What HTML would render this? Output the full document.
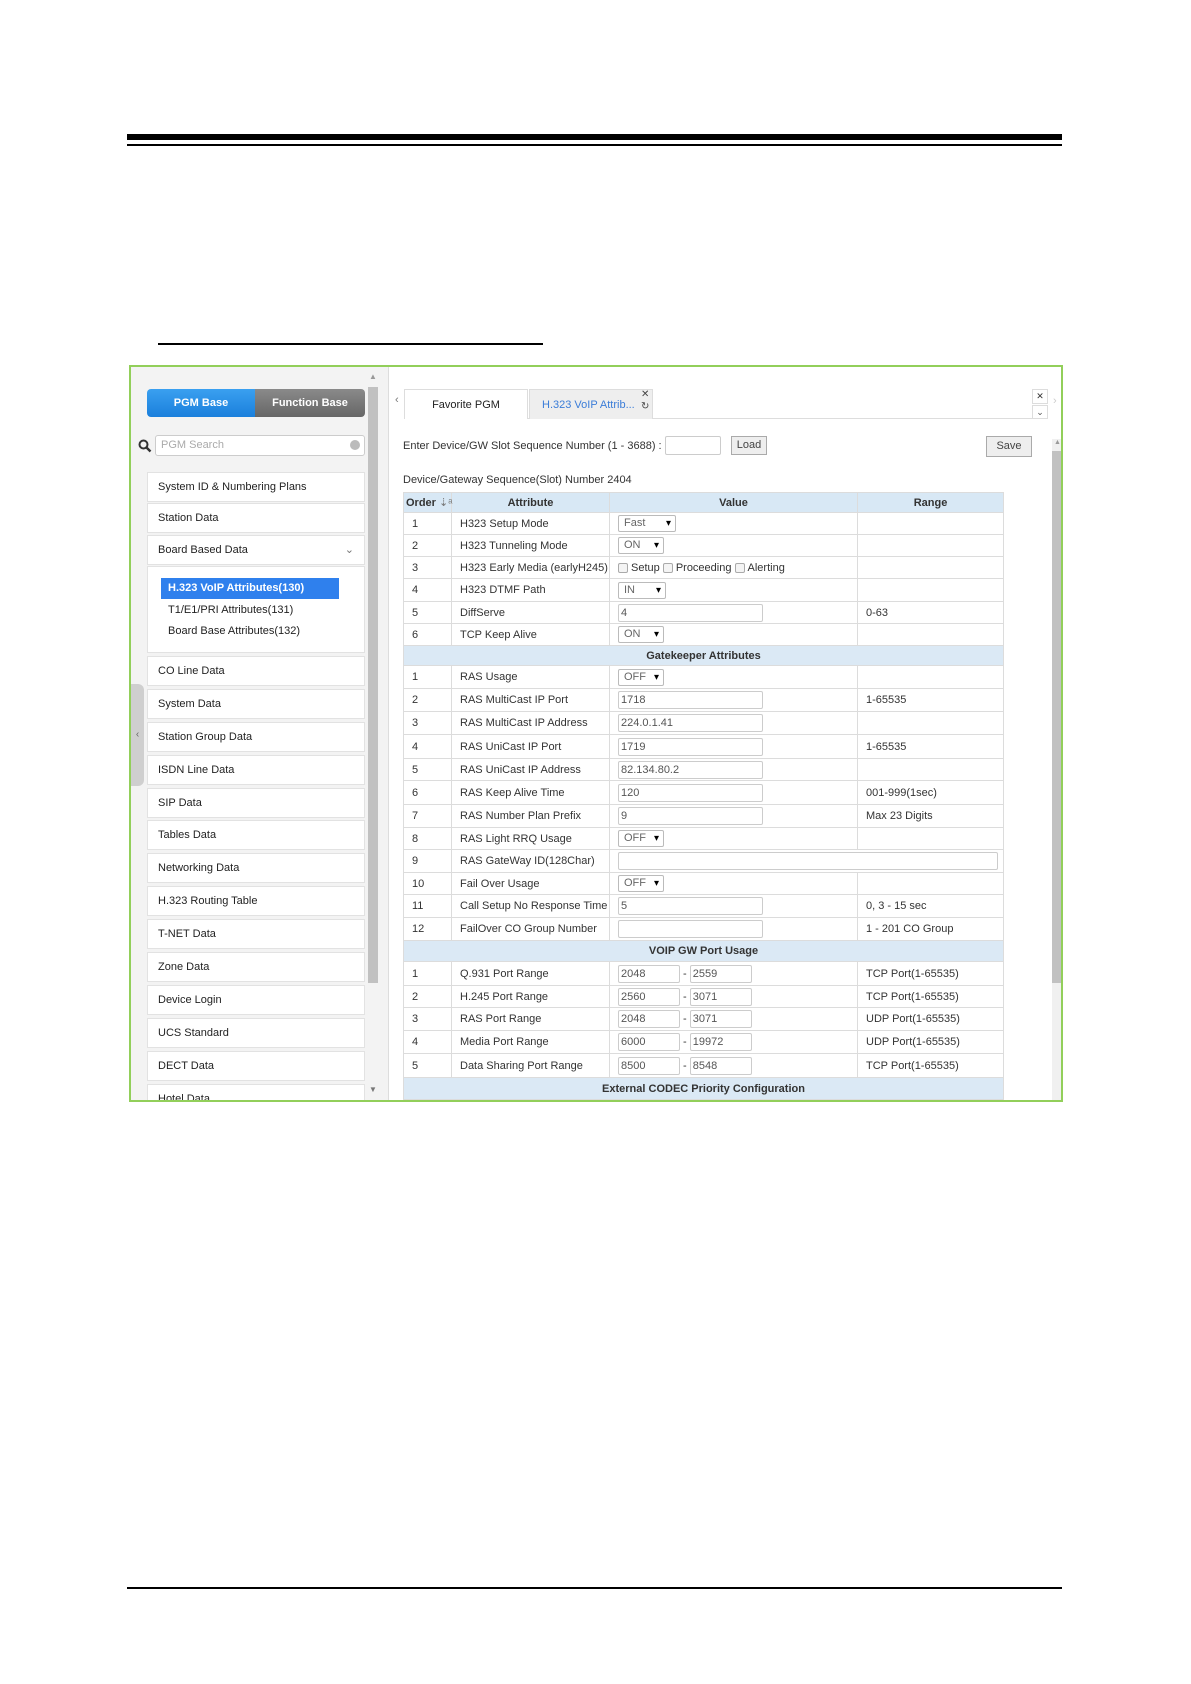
<!DOCTYPE html>
<html><head><meta charset="utf-8">
<style>
*{margin:0;padding:0;box-sizing:border-box}
body{width:1191px;height:1684px;background:#fff;position:relative;font-family:"Liberation Sans",Arial,sans-serif;color:#333;overflow:hidden}
.a{position:absolute}
.box{left:129px;top:365px;width:934px;height:737px;border:2px solid #92cf5a;background:#fff;overflow:hidden}
.lp{left:0;top:0;width:257px;height:735px;background:#f3f3f3}
.mi{position:absolute;left:16px;width:218px;height:30px;background:#fff;border:1px solid #e2e2e2;font-size:11px;line-height:28px;padding-left:10px;color:#222}
table{border-collapse:collapse;font-size:11px;table-layout:fixed}
td{border:1px solid #dcdcdc;padding:0 0 0 8px;white-space:nowrap;vertical-align:middle;overflow:visible}
tr.h td{background:#d8e8f5;font-weight:bold;text-align:center;padding:0;color:#333}
tr.s td{background:#dbe9f5;font-weight:bold;text-align:center;padding:0}
.in{display:inline-block;height:18px;border:1px solid #ccc;border-radius:2px;vertical-align:middle;font-size:11px;line-height:16px;padding-left:2px;color:#555;background:#fff}
.sel{display:inline-block;height:17px;border:1px solid #bbb;border-radius:2px;vertical-align:middle;font-size:11px;line-height:15px;padding-left:5px;color:#666;position:relative;background:#fff}
.sel:after{content:"▾";position:absolute;right:4px;top:0;font-size:10px;color:#000}
.cb{display:inline-block;width:10px;height:10px;border:1px solid #aaa;border-radius:2px;vertical-align:middle;margin-right:3px;background:#f4f4f4}
</style></head><body>
<div class="a" style="left:127px;top:134px;width:935px;height:6px;background:#000"></div>
<div class="a" style="left:127px;top:144px;width:935px;height:2px;background:#000"></div>
<div class="a" style="left:158px;top:343px;width:385px;height:2px;background:#000"></div>
<div class="a" style="left:127px;top:1587px;width:935px;height:2px;background:#000"></div>

<div class="a box">
 <div class="a lp">
  <div class="a" style="left:0;top:317px;width:13px;height:102px;background:#cfcfcf;border-radius:0 6px 6px 0;font-size:10px;color:#666;line-height:102px;text-align:center">‹</div>
  <div class="a" style="left:16px;top:22px;width:218px;height:28px;border-radius:4px;overflow:hidden;font-size:11px;font-weight:bold;color:#fff;line-height:28px;text-align:center">
   <div class="a" style="left:0;top:0;width:108px;height:28px;background:linear-gradient(#3aa0f0,#1a7fdc)">PGM Base</div>
   <div class="a" style="left:108px;top:0;width:110px;height:28px;background:linear-gradient(#8a8a8a,#666)">Function Base</div>
  </div>
  <svg class="a" style="left:7px;top:72px" width="14" height="14" viewBox="0 0 14 14"><circle cx="5.5" cy="5.5" r="4" fill="none" stroke="#333" stroke-width="2"/><path d="M8.5 8.5L12.5 12.5" stroke="#333" stroke-width="2.4"/></svg>
  <div class="a" style="left:24px;top:68px;width:210px;height:21px;background:#fff;border:1px solid #ccc;border-radius:3px;font-size:11px;color:#aaa;line-height:19px;padding-left:5px">PGM Search<span style="position:absolute;right:4px;top:4px;width:10px;height:10px;border-radius:50%;background:#bbb"></span></div>
  <div class="mi" style="top:105px">System ID &amp; Numbering Plans</div>
  <div class="mi" style="top:136px">Station Data</div>
  <div class="mi" style="top:168px">Board Based Data<span style="position:absolute;right:10px;color:#777">⌄</span></div>
  <div class="a" style="left:16px;top:199px;width:218px;height:87px;background:#fff;border:1px solid #e2e2e2">
   <div class="a" style="left:13px;top:11px;width:178px;height:21px;background:#2f80ed;color:#fff;font-weight:bold;font-size:11px;line-height:21px;padding-left:7px">H.323 VoIP Attributes(130)</div>
   <div class="a" style="left:20px;top:33px;font-size:11px;line-height:21px;color:#222">T1/E1/PRI Attributes(131)</div>
   <div class="a" style="left:20px;top:54px;font-size:11px;line-height:21px;color:#222">Board Base Attributes(132)</div>
  </div>
  <div class="mi" style="top:289px">CO Line Data</div>
  <div class="mi" style="top:322px">System Data</div>
  <div class="mi" style="top:355px">Station Group Data</div>
  <div class="mi" style="top:388px">ISDN Line Data</div>
  <div class="mi" style="top:421px">SIP Data</div>
  <div class="mi" style="top:453px">Tables Data</div>
  <div class="mi" style="top:486px">Networking Data</div>
  <div class="mi" style="top:519px">H.323 Routing Table</div>
  <div class="mi" style="top:552px">T-NET Data</div>
  <div class="mi" style="top:585px">Zone Data</div>
  <div class="mi" style="top:618px">Device Login</div>
  <div class="mi" style="top:651px">UCS Standard</div>
  <div class="mi" style="top:684px">DECT Data</div>
  <div class="mi" style="top:717px">Hotel Data</div>
  <div class="a" style="left:237px;top:20px;width:10px;height:596px;background:#c1c1c1"></div>
  <div class="a" style="left:237px;top:0;width:10px;height:20px;font-size:8px;color:#999;text-align:center;line-height:20px">▲</div>
  <div class="a" style="left:237px;top:718px;width:10px;height:16px;font-size:8px;color:#777;text-align:center">▼</div>
 </div>
 <div class="a" style="left:257px;top:0;width:1px;height:735px;background:#ddd"></div>

 <div class="a" style="left:264px;top:27px;font-size:11px;color:#777">‹</div>
 <div class="a" style="left:273px;top:51px;width:644px;height:1px;background:#ddd"></div>
 <div class="a" style="left:273px;top:22px;width:124px;height:30px;background:#fff;border:1px solid #ddd;border-bottom:none;font-size:11px;line-height:30px;text-align:center;color:#222">Favorite PGM</div>
 <div class="a" style="left:398px;top:22px;width:124px;height:30px;background:#eee;border:1px solid #ddd;border-bottom:none;font-size:11px;line-height:30px;padding-left:12px;color:#3b7dd8">H.323 VoIP Attrib...</div>
 <div class="a" style="left:510px;top:22px;font-size:10px;color:#444;line-height:12px">✕<br>↻</div>
 <div class="a" style="left:901px;top:22px;width:16px;height:15px;border:1px solid #ddd;font-size:9px;text-align:center;line-height:13px;color:#333">✕</div>
 <div class="a" style="left:901px;top:38px;width:16px;height:14px;border:1px solid #ddd;font-size:9px;text-align:center;line-height:12px;color:#555">⌄</div>
 <div class="a" style="left:922px;top:28px;font-size:11px;color:#ccc">›</div>

 <div class="a" style="left:272px;top:73px;font-size:11px;color:#333">Enter Device/GW Slot Sequence Number (1 - 3688) :</div>
 <div class="a" style="left:534px;top:69px;width:56px;height:19px;border:1px solid #ccc;border-radius:2px"></div>
 <div class="a" style="left:600px;top:69px;width:36px;height:19px;border:1px solid #aaa;background:#eee;font-size:11px;text-align:center;line-height:17px;color:#444">Load</div>
 <div class="a" style="left:855px;top:69px;width:46px;height:21px;border:1px solid #aaa;background:#eee;font-size:11px;text-align:center;line-height:19px;color:#444">Save</div>
 <div class="a" style="left:272px;top:107px;font-size:11px;color:#333">Device/Gateway Sequence(Slot) Number 2404</div>

 <div class="a" style="left:921px;top:72px;width:11px;height:663px;background:#f0f0f0"></div>
 <div class="a" style="left:921px;top:84px;width:11px;height:532px;background:#c1c1c1"></div>
 <div class="a" style="left:921px;top:72px;width:11px;height:12px;font-size:7px;color:#999;text-align:center">▲</div>

 <table class="a" style="left:272px;top:125px;width:600px">
  <colgroup><col style="width:48px"><col style="width:158px"><col style="width:248px"><col style="width:146px"></colgroup>
  <tr class="h" style="height:20px"><td style="text-align:left;padding-left:2px">Order <span style="font-weight:normal;color:#777">⇣ᵃ</span></td><td>Attribute</td><td>Value</td><td>Range</td></tr>
  <tr style="height:22px"><td>1</td><td>H323 Setup Mode</td><td><span class="sel" style="width:58px">Fast</span></td><td></td></tr>
  <tr style="height:22px"><td>2</td><td>H323 Tunneling Mode</td><td><span class="sel" style="width:46px">ON</span></td><td></td></tr>
  <tr style="height:22px"><td>3</td><td>H323 Early Media (earlyH245)</td><td style="padding-left:8px"><span class="cb"></span>Setup <span class="cb"></span>Proceeding <span class="cb"></span>Alerting</td><td></td></tr>
  <tr style="height:23px"><td>4</td><td>H323 DTMF Path</td><td><span class="sel" style="width:48px">IN</span></td><td></td></tr>
  <tr style="height:22px"><td>5</td><td>DiffServe</td><td><span class="in" style="width:145px">4</span></td><td>0-63</td></tr>
  <tr style="height:22px"><td>6</td><td>TCP Keep Alive</td><td><span class="sel" style="width:46px">ON</span></td><td></td></tr>
  <tr class="s" style="height:20px"><td colspan="4">Gatekeeper Attributes</td></tr>
  <tr style="height:23px"><td>1</td><td>RAS Usage</td><td><span class="sel" style="width:46px">OFF</span></td><td></td></tr>
  <tr style="height:23px"><td>2</td><td>RAS MultiCast IP Port</td><td><span class="in" style="width:145px">1718</span></td><td>1-65535</td></tr>
  <tr style="height:23px"><td>3</td><td>RAS MultiCast IP Address</td><td><span class="in" style="width:145px">224.0.1.41</span></td><td></td></tr>
  <tr style="height:24px"><td>4</td><td>RAS UniCast IP Port</td><td><span class="in" style="width:145px">1719</span></td><td>1-65535</td></tr>
  <tr style="height:22px"><td>5</td><td>RAS UniCast IP Address</td><td><span class="in" style="width:145px">82.134.80.2</span></td><td></td></tr>
  <tr style="height:24px"><td>6</td><td>RAS Keep Alive Time</td><td><span class="in" style="width:145px">120</span></td><td>001-999(1sec)</td></tr>
  <tr style="height:23px"><td>7</td><td>RAS Number Plan Prefix</td><td><span class="in" style="width:145px">9</span></td><td>Max 23 Digits</td></tr>
  <tr style="height:22px"><td>8</td><td>RAS Light RRQ Usage</td><td><span class="sel" style="width:46px">OFF</span></td><td></td></tr>
  <tr style="height:23px"><td>9</td><td>RAS GateWay ID(128Char)</td><td colspan="2"><span class="in" style="width:380px"></span></td></tr>
  <tr style="height:22px"><td>10</td><td>Fail Over Usage</td><td><span class="sel" style="width:46px">OFF</span></td><td></td></tr>
  <tr style="height:23px"><td>11</td><td>Call Setup No Response Time</td><td><span class="in" style="width:145px">5</span></td><td>0, 3 - 15 sec</td></tr>
  <tr style="height:23px"><td>12</td><td>FailOver CO Group Number</td><td><span class="in" style="width:145px"></span></td><td>1 - 201 CO Group</td></tr>
  <tr class="s" style="height:21px"><td colspan="4">VOIP GW Port Usage</td></tr>
  <tr style="height:24px"><td>1</td><td>Q.931 Port Range</td><td><span class="in" style="width:62px">2048</span> - <span class="in" style="width:62px">2559</span></td><td>TCP Port(1-65535)</td></tr>
  <tr style="height:22px"><td>2</td><td>H.245 Port Range</td><td><span class="in" style="width:62px">2560</span> - <span class="in" style="width:62px">3071</span></td><td>TCP Port(1-65535)</td></tr>
  <tr style="height:23px"><td>3</td><td>RAS Port Range</td><td><span class="in" style="width:62px">2048</span> - <span class="in" style="width:62px">3071</span></td><td>UDP Port(1-65535)</td></tr>
  <tr style="height:23px"><td>4</td><td>Media Port Range</td><td><span class="in" style="width:62px">6000</span> - <span class="in" style="width:62px">19972</span></td><td>UDP Port(1-65535)</td></tr>
  <tr style="height:24px"><td>5</td><td>Data Sharing Port Range</td><td><span class="in" style="width:62px">8500</span> - <span class="in" style="width:62px">8548</span></td><td>TCP Port(1-65535)</td></tr>
  <tr class="s" style="height:22px"><td colspan="4">External CODEC Priority Configuration</td></tr>
  <tr style="height:22px"><td></td><td></td><td></td><td></td></tr>
 </table>
</div>
</body></html>
